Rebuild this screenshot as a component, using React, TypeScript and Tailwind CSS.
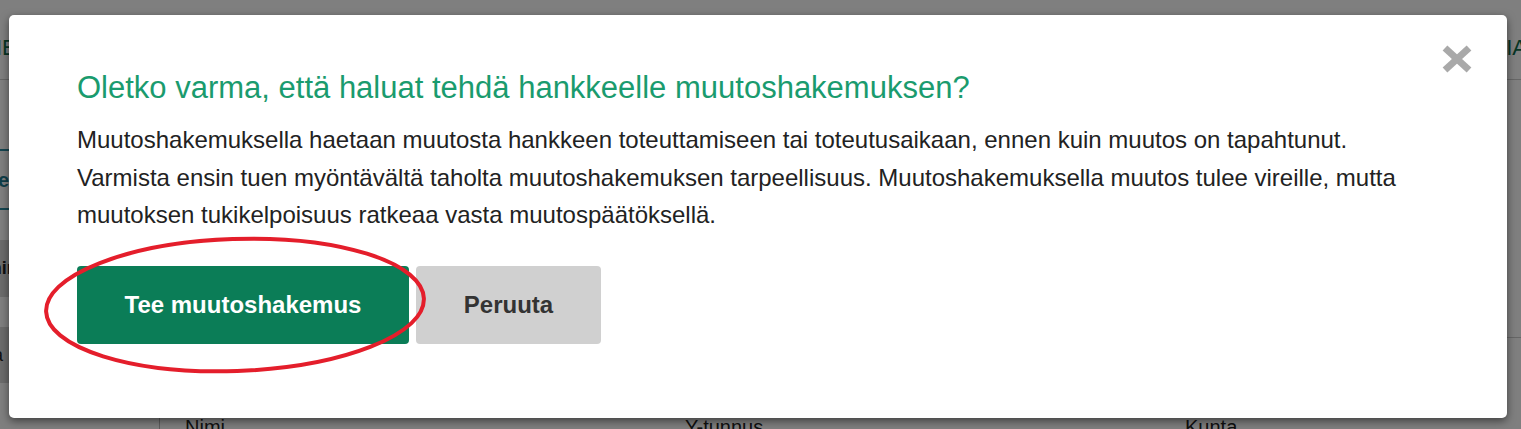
import React from "react";

export default function App() {
  return (
    <div className="relative w-[1521px] h-[429px] overflow-hidden bg-white font-['Liberation_Sans',Arial,sans-serif] text-[#222]">
      {/* Background page */}
      <div className="flex flex-col w-full h-full">
        <header className="h-[80px] shrink-0 border-b border-[#ccc] flex items-start justify-between pt-[36px]">
          <span className="-ml-[14px] text-[22px] leading-[24px] text-[#0f6b4a] font-normal">NE</span>
          <span className="-mr-[6px] text-[22px] leading-[24px] text-[#0f6b4a]">NIA</span>
        </header>
        <div className="flex flex-1 min-h-0">
          <aside className="w-[160px] shrink-0 border-r border-[#bbb] flex flex-col">
            <div className="h-[69px] shrink-0" />
            <div className="h-[61px] shrink-0 border-y-2 border-[#2a8ba0] flex items-center -ml-[62px] text-[20px] font-bold text-[#1f7d92]">
              Hankkeet
            </div>
            <div className="h-[30px] shrink-0" />
            <div className="h-[57px] shrink-0 bg-[#d8d8d8] flex items-center -ml-[40px] text-[18px] font-bold text-[#222]">
              Toiminta
            </div>
            <div className="h-[30px] shrink-0" />
            <div className="h-[56px] shrink-0 bg-[#d8d8d8] flex items-center -ml-[50px] text-[18px] text-[#222]">
              Hanna
            </div>
          </aside>
          <main className="flex-1 flex flex-col">
            <div className="h-[258px] shrink-0 border-b border-[#ccc]" />
            <div className="h-[78px] shrink-0" />
            <div className="grid grid-cols-[500px_500px_1fr] pl-[25px] text-[20px] leading-[23px] text-[#222]">
              <span>Nimi</span>
              <span>Y-tunnus</span>
              <span>Kunta</span>
            </div>
          </main>
        </div>
      </div>

      {/* Overlay */}
      <div className="absolute inset-0 bg-black/50" />

      {/* Modal */}
      <div className="absolute left-[9px] top-[15px] w-[1498px] h-[403px] bg-white rounded-[5px] shadow-[0_3px_9px_rgba(0,0,0,0.5)] pl-[68px] pt-[55px]">
        <button className="absolute right-[35px] top-[30px] w-[30px] h-[28px]" aria-label="Sulje">
          <svg width="30" height="28" viewBox="0 0 30 28">
            <line x1="3" y1="3" x2="27" y2="25" stroke="#a9a9a9" strokeWidth="7" />
            <line x1="27" y1="3" x2="3" y2="25" stroke="#a9a9a9" strokeWidth="7" />
          </svg>
        </button>
        <h2 className="text-[31px] leading-[36px] font-normal text-[#1a9b6e]">
          Oletko varma, että haluat tehdä hankkeelle muutoshakemuksen?
        </h2>
        <p className="mt-[15px] text-[24px] leading-[37.5px] text-[#222] whitespace-nowrap">
          Muutoshakemuksella haetaan muutosta hankkeen toteuttamiseen tai toteutusaikaan, ennen kuin muutos on tapahtunut.
          <br />
          Varmista ensin tuen myöntävältä taholta muutoshakemuksen tarpeellisuus. Muutoshakemuksella muutos tulee vireille, mutta
          <br />
          muutoksen tukikelpoisuus ratkeaa vasta muutospäätöksellä.
        </p>
        <div className="mt-[32.5px] flex gap-[7px]">
          <button className="w-[332px] h-[78px] rounded-[4px] bg-[#0b7d57] text-white text-[24px] font-bold">
            Tee muutoshakemus
          </button>
          <button className="w-[185px] h-[78px] rounded-[4px] bg-[#d0d0d0] text-[#333] text-[24px] font-bold">
            Peruuta
          </button>
        </div>
      </div>

      {/* Annotation ellipse */}
      <svg className="absolute left-[40px] top-[232px] pointer-events-none" width="392" height="146" viewBox="0 0 392 146">
        <ellipse cx="195" cy="73" rx="189" ry="66" fill="none" stroke="#e41e2b" strokeWidth="4" transform="rotate(-2 195 73)" />
      </svg>
    </div>
  );
}
